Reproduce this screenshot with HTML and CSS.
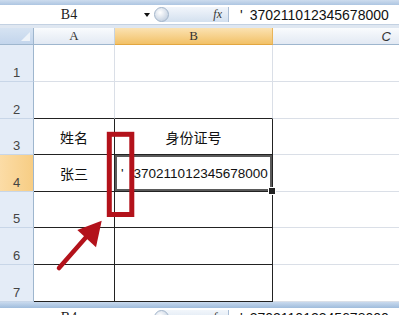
FILE: index.html
```html
<!DOCTYPE html>
<html>
<head>
	<meta charset="utf-8">
	<title>身份证号输入</title>
	<link rel="stylesheet" href="styles.css">
</head>

<body>

	<div class="band"></div>
	<div class="fbar">
		<div class="namebox">B4</div>
		<div class="drop"></div>
		<div class="fxzone"><span class="knob"></span><span class="fx">fx</span></div>
		<div class="formula"><span class="apos">'</span>370211012345678000</div>
	</div>
	<div class="sep"></div>

	<div class="sheet">
		<div class="corner"></div>
		<div class="ch">A</div>
		<div class="ch on">B</div>
		<div class="ch cc">C</div>

		<div class="rh">1</div>
		<div class="c"></div>
		<div class="c"></div>
		<div class="c cc"></div>

		<div class="rh">2</div>
		<div class="c bb"></div>
		<div class="c bb"></div>
		<div class="c cc"></div>

		<div class="rh">3</div>
		<div class="c bb br">姓名</div>
		<div class="c bb br">身份证号</div>
		<div class="c cc"></div>

		<div class="rh on">4</div>
		<div class="c bb br">张三</div>
		<div class="c bb br sel"><span class="apos">'</span>370211012345678000</div>
		<div class="c cc"></div>

		<div class="rh">5</div>
		<div class="c bb br"></div>
		<div class="c bb br"></div>
		<div class="c cc"></div>

		<div class="rh">6</div>
		<div class="c bb br"></div>
		<div class="c bb br"></div>
		<div class="c cc"></div>

		<div class="rh">7</div>
		<div class="c bb br"></div>
		<div class="c bb br"></div>
		<div class="c cc"></div>

		<!-- 标注：红框和箭头 -->
		<svg class="marks" width="399" height="274" viewBox="0 0 399 274">
			<rect x="109.3" y="106.3" width="22.5" height="80.2" fill="none" stroke="#b3121b" stroke-width="5"/>
			<line x1="59" y1="240" x2="88" y2="207" stroke="#b3121b" stroke-width="4.5" stroke-linecap="round"/>
			<polygon points="101.7,192.7 77.3,202 96,219.3" fill="#b3121b"/>
		</svg>
	</div>

	<div class="band low"></div>
	<div class="fbar">
		<div class="namebox">B4</div>
		<div class="drop"></div>
		<div class="fxzone"><span class="knob"></span><span class="fx">fx</span></div>
		<div class="formula"><span class="apos">'</span>370211012345678000</div>
	</div>

</body>
</html>
```

FILE: styles.css
```css
* {
	padding: 0;
	margin: 0;
	box-sizing: border-box;
}
body {
	width: 399px;
	height: 315px;
	overflow: hidden;
	background: #fff;
	font-family: "Liberation Sans", "Noto Sans CJK SC", sans-serif;
}

/* 顶部工具条 */
.band {
	height: 5px;
	background: linear-gradient(#cddcee, #adc5e1);
}
.band.low {
	height: 6px;
	background: linear-gradient(#c9daee, #9fbcdc);
}
.fbar {
	display: flex;
	height: 20px;
	background: #fff;
	border-bottom: 1px solid #c3d1e2;
}
.namebox {
	display: flex;
	align-items: center;
	justify-content: center;
	width: 138px;
	font-family: "Liberation Serif", serif;
	font-size: 14px;
	color: #222;
}
.drop {
	display: flex;
	align-items: center;
	justify-content: center;
	width: 17px;
}
.drop::before {
	content: '';
	border-left: 3.5px solid transparent;
	border-right: 3.5px solid transparent;
	border-top: 4px solid #111;
}
.fxzone {
	display: flex;
	align-items: center;
	justify-content: space-between;
	width: 74px;
	margin: 2px 0;
	padding-right: 6px;
	background: linear-gradient(#f2f6fb, #d3e0ef);
	border-radius: 9px 0 0 9px;
	border-right: 1px solid #a9bdd5;
}
.knob {
	width: 15px;
	height: 15px;
	margin-left: -1px;
	border-radius: 50%;
	border: 1px solid #a3b5ca;
	background: radial-gradient(circle at 40% 35%, #fff, #b4c4d8);
}
.fx {
	font-family: "Liberation Serif", serif;
	font-style: italic;
	font-size: 12px;
	color: #333;
}
.formula {
	display: flex;
	align-items: center;
	flex: 1;
	padding-left: 11px;
	font-size: 14px;
	color: #111;
	white-space: nowrap;
}
.formula .apos {
	margin-right: 7px;
}
.sep {
	height: 3px;
	background: #dfe7f1;
}

/* 表格区 */
.sheet {
	position: relative;
	display: grid;
	grid-template-columns: 34px 81px 158px 126px;
	grid-template-rows: 17px 37px 37px 36px 37px 36px 37px 37px;
}
.corner {
	position: relative;
	background: linear-gradient(#d6e3f2, #c3d5ec);
	border-right: 1px solid #9eb6ce;
	border-bottom: 1px solid #9eb6ce;
}
.corner::after {
	content: '';
	position: absolute;
	right: 3px;
	bottom: 3px;
	border-left: 9px solid transparent;
	border-bottom: 9px solid #eef3f9;
}
.ch {
	display: flex;
	align-items: center;
	justify-content: center;
	background: linear-gradient(#f9fbfd, #e2e9f3);
	border-right: 1px solid #c5d3e3;
	border-bottom: 1px solid #9eb6ce;
	font-family: "Liberation Serif", serif;
	font-size: 13px;
	color: #333;
}
.ch.on {
	background: linear-gradient(#fbe2b2, #f2c167);
	border-bottom-color: #e2a640;
	border-right-color: #e9b55a;
}
.ch.cc {
	justify-content: flex-end;
	padding-right: 8px;
	border-right: none;
	font-family: "Liberation Sans", sans-serif;
	font-style: italic;
}
.rh {
	display: flex;
	align-items: flex-end;
	justify-content: center;
	padding-bottom: 1px;
	background: #e4ecf7;
	border-right: 1px solid #9eb6ce;
	border-bottom: 1px solid #c8d6e8;
	font-size: 13px;
	color: #444;
}
.rh.on {
	background: linear-gradient(90deg, #fbdca6, #f7cd84);
}
.c {
	display: flex;
	align-items: center;
	justify-content: center;
	border-right: 1px solid #dadfe7;
	border-bottom: 1px solid #dadfe7;
	font-size: 14px;
	color: #111;
	white-space: nowrap;
}
.c.bb {
	border-bottom-color: #222;
}
.c.br {
	border-right-color: #222;
}
.c.cc {
	border-right: none;
}
.sel {
	position: relative;
	justify-content: flex-start;
	padding-left: 6px;
	font-size: 13.5px;
	box-shadow: inset 0 0 0 2px #5a5a5a;
}
.sel .apos {
	margin-right: 10px;
}
.sel::after {
	content: '';
	position: absolute;
	right: -4px;
	bottom: -4px;
	width: 6px;
	height: 6px;
	background: #222;
	border: 1px solid #fff;
}
.marks {
	position: absolute;
	left: 0;
	top: 0;
	pointer-events: none;
}
```
